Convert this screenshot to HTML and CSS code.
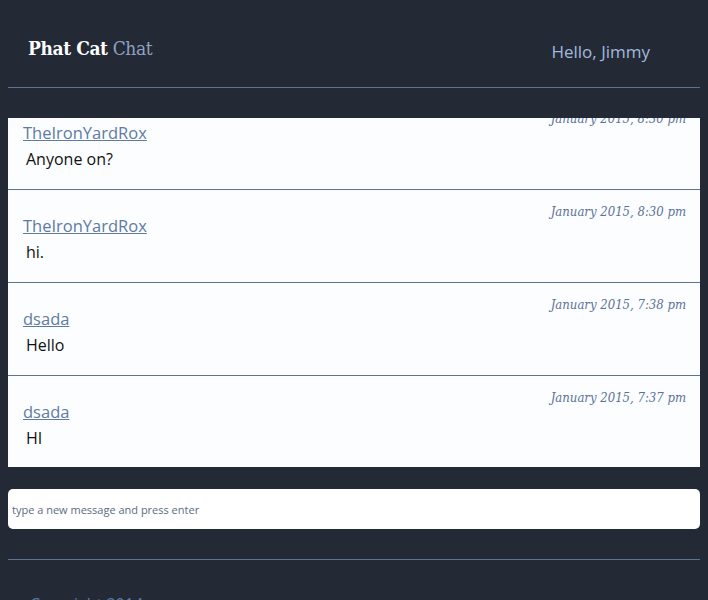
FILE: index.html
```html
<!DOCTYPE html>
<html>
<head>
<meta charset="utf-8">
<link rel="stylesheet" href="styles.css">
</head>
<body>
<header class="site-header">
  <h1 class="brand"><span class="brand-main">Phat Cat</span> <span class="brand-sub">Chat</span></h1>
  <div class="greeting">Hello, Jimmy</div>
</header>
<main class="chat">
  <ul class="messages">
    <li class="message first">
      <div class="time">January 2015, 8:30 pm</div>
      <a class="user" href="#">TheIronYardRox</a>
      <p class="text">Anyone on?</p>
    </li>
    <li class="message">
      <div class="time">January 2015, 8:30 pm</div>
      <a class="user" href="#">TheIronYardRox</a>
      <p class="text">hi.</p>
    </li>
    <li class="message">
      <div class="time">January 2015, 7:38 pm</div>
      <a class="user" href="#">dsada</a>
      <p class="text">Hello</p>
    </li>
    <li class="message">
      <div class="time">January 2015, 7:37 pm</div>
      <a class="user" href="#">dsada</a>
      <p class="text">HI</p>
    </li>
  </ul>
  <input class="composer" type="text" placeholder="type a new message and press enter">
</main>
<footer class="site-footer">
  <p class="copyright">Copyright 2014</p>
</footer>
</body>
</html>
```
FILE: styles.css
```css
html, body {
  margin: 0;
  padding: 0;
}
body {
  background: #242936;
  padding: 0 8px;
  font-family: "Open Sans", "DejaVu Sans", sans-serif;
  overflow: hidden;
  height: 600px;
}
.site-header {
  display: flex;
  align-items: center;
  justify-content: space-between;
  height: 88px;
  border-bottom: 1px solid #5d7394;
  padding: 8px 50px 0 20px;
  box-sizing: border-box;
}
.brand {
  margin: 0;
  font-family: "DejaVu Serif", serif;
  font-stretch: condensed;
  font-size: 19px;
  font-weight: normal;
  letter-spacing: -0.4px;
  padding-bottom: 0;
}
.brand-main {
  color: #ffffff;
  font-weight: bold;
}
.brand-sub {
  color: #8ea3c2;
}
.greeting {
  color: #a0b9de;
  font-size: 17px;
  padding-top: 8px;
}
.chat {
  padding-top: 30px;
}
.messages {
  list-style: none;
  margin: 0;
  padding: 0;
  height: 349px;
  overflow: hidden;
  background: #fbfdff;
}
.message {
  height: 93px;
  box-sizing: border-box;
  border-bottom: 1px solid #5d7394;
  padding: 13px 14px 0 15px;
  display: flex;
  flex-direction: column;
  align-items: flex-start;
}
.message.first {
  margin-top: -21px;
}
.time {
  align-self: flex-end;
  font-family: "DejaVu Serif", serif;
  font-stretch: condensed;
  font-style: italic;
  font-size: 13px;
  color: #5b7298;
  line-height: 18px;
}
.user {
  color: #5f7ba0;
  font-size: 16.5px;
  line-height: 20px;
  margin-top: -5px;
}
.text {
  margin: 5px 0 0 3px;
  font-size: 16px;
  line-height: 22px;
  color: #111;
}
.composer {
  display: block;
  width: 100%;
  box-sizing: border-box;
  margin-top: 22px;
  height: 40px;
  border: none;
  border-radius: 5px;
  background: #fff;
  padding: 0 4px;
  font-family: "Open Sans", sans-serif;
  font-size: 11px;
  outline: none;
}
.composer::placeholder {
  color: #5b6b80;
}
.site-footer {
  margin-top: 30px;
  border-top: 1px solid #5d7394;
  padding: 33px 0 0 22px;
}
.copyright {
  margin: 0;
  color: #5b7aa8;
  font-size: 16px;
}
```
